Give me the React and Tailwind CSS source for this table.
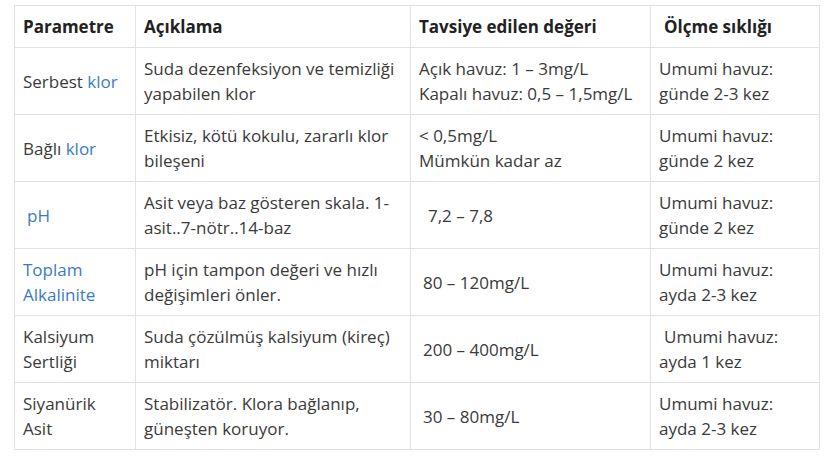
import React from "react";

const link = "text-[#3b7bc4]";

const rows = [
  {
    p: <>Serbest <span className={link}>klor</span></>,
    a: "Suda dezenfeksiyon ve temizliği yapabilen klor",
    t: <>Açık havuz: 1 – 3mg/L<br />Kapalı havuz: 0,5 – 1,5mg/L</>,
    o: <>Umumi havuz:<br />günde 2-3 kez</>,
  },
  {
    p: <>Bağlı <span className={link}>klor</span></>,
    a: "Etkisiz, kötü kokulu, zararlı klor bileşeni",
    t: <>&lt; 0,5mg/L<br />Mümkün kadar az</>,
    o: <>Umumi havuz:<br />günde 2 kez</>,
  },
  {
    p: <span className={`${link} pl-[4px]`}>pH</span>,
    a: "Asit veya baz gösteren skala. 1-asit..7-nötr..14-baz",
    t: <span className="pl-[9px]">7,2 – 7,8</span>,
    o: <>Umumi havuz:<br />günde 2 kez</>,
  },
  {
    p: <span className={link}>Toplam Alkalinite</span>,
    a: "pH için tampon değeri ve hızlı değişimleri önler.",
    t: <span className="pl-[4px]">80 – 120mg/L</span>,
    o: <>Umumi havuz:<br />ayda 2-3 kez</>,
  },
  {
    p: <>Kalsiyum Sertliği</>,
    a: "Suda çözülmüş kalsiyum (kireç) miktarı",
    t: <span className="pl-[4px]">200 – 400mg/L</span>,
    o: <><span className="pl-[5px]">Umumi havuz:</span><br />ayda 1 kez</>,
  },
  {
    p: <>Siyanürik<br />Asit</>,
    a: "Stabilizatör. Klora bağlanıp, güneşten koruyor.",
    t: <span className="pl-[4px]">30 – 80mg/L</span>,
    o: <>Umumi havuz:<br />ayda 2-3 kez</>,
  },
];

const cell = "border border-[#e2e2e2] px-[8px] py-[8px] align-middle";

export default function App() {
  return (
    <div className="w-[834px] h-[466px] bg-white pt-[5px] pl-[14px]" style={{ fontFamily: '"Open Sans", sans-serif' }}>
      <table className="table-fixed border-collapse w-[805px] text-[17px] leading-[25px] text-[#3a3a3a]">
        <colgroup>
          <col className="w-[121px]" />
          <col className="w-[275px]" />
          <col className="w-[240px]" />
          <col className="w-[169px]" />
        </colgroup>
        <thead>
          <tr className="h-[42px]">
            <th className={`${cell} text-left font-bold text-[#222]`}>Parametre</th>
            <th className={`${cell} text-left font-bold text-[#222]`}>Açıklama</th>
            <th className={`${cell} text-left font-bold text-[#222]`}>Tavsiye edilen değeri</th>
            <th className={`${cell} text-left font-bold text-[#222]`}><span className="pl-[5px]">Ölçme sıklığı</span></th>
          </tr>
        </thead>
        <tbody>
          {rows.map((r, i) => (
            <tr key={i} className="h-[67px]">
              <td className={cell}>{r.p}</td>
              <td className={cell}>{r.a}</td>
              <td className={cell}>{r.t}</td>
              <td className={cell}>{r.o}</td>
            </tr>
          ))}
        </tbody>
      </table>
    </div>
  );
}
